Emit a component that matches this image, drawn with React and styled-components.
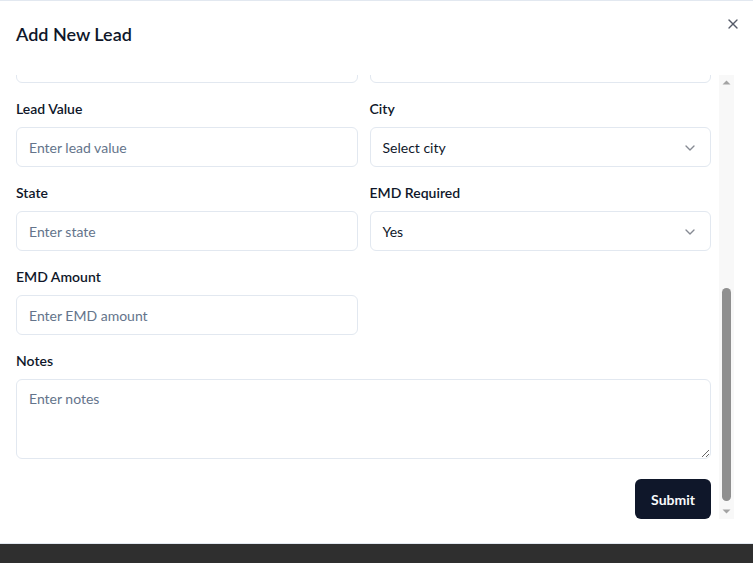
import React, { useLayoutEffect, useRef, useState } from "react";
import styled, { createGlobalStyle } from "styled-components";
import { X, ChevronDown } from "lucide-react";

const GlobalStyle = createGlobalStyle`
  html, body {
    margin: 0;
    padding: 0;
    background: #2f2f2f;
    height: 100%;
  }
  * { box-sizing: border-box; }
  body {
    font-family: "Lato", "Liberation Sans", sans-serif;
    color: #0f172a;
  }
`;

const Modal = styled.div`
  position: relative;
  width: 753px;
  height: 544px;
  background: #ffffff;
  border-top: 1px solid #e2e8f0;
  border-bottom: 1px solid #e2e8f0;
  padding: 19px 0 24px;
  display: flex;
  flex-direction: column;
  gap: 27px;
`;

const Header = styled.div`
  padding: 0 16px;
  height: 28px;
  display: flex;
  align-items: center;
`;

const Title = styled.h2`
  margin: 0;
  font-size: 18px;
  line-height: 28px;
  font-weight: 600;
  color: #0f172a;
`;

const CloseButton = styled.button`
  position: absolute;
  top: 15px;
  right: 12px;
  width: 16px;
  height: 16px;
  padding: 0;
  border: none;
  background: transparent;
  color: #0f172a;
  opacity: 0.7;
  display: flex;
  align-items: center;
  justify-content: center;
  cursor: pointer;
`;

const ScrollFrame = styled.div`
  height: 444px;
  margin: 0 19px 0 16px;
  display: flex;
`;

const Viewport = styled.div`
  flex: 1;
  min-width: 0;
  padding-right: 8px;
  overflow-y: auto;
  scrollbar-width: none;
  &::-webkit-scrollbar { display: none; }
`;

const ScrollTrack = styled.div`
  width: 15px;
  flex: none;
  background: #f8f8f8;
  display: flex;
  flex-direction: column;
`;

const ArrowButton = styled.div`
  height: 15px;
  flex: none;
  display: flex;
  align-items: center;
  justify-content: center;
`;

const ThumbRail = styled.div`
  position: relative;
  flex: 1;
`;

const Thumb = styled.div`
  position: absolute;
  left: 3px;
  right: 3px;
  background: #8f8f8f;
  border-radius: 5px;
`;

const Form = styled.form`
  display: flex;
  flex-direction: column;
`;

const Grid = styled.div`
  display: grid;
  grid-template-columns: 1fr 1fr;
  column-gap: 12px;
  row-gap: 16px;
`;

const Field = styled.div`
  display: flex;
  flex-direction: column;
  gap: 8px;
  grid-column: ${p => (p.$full ? "1 / -1" : "auto")};
`;

const Label = styled.label`
  font-size: 14px;
  line-height: 20px;
  font-weight: 600;
  color: #0f172a;
`;

const Input = styled.input`
  height: 40px;
  width: 100%;
  border: 1px solid #e2e8f0;
  border-radius: 6px;
  padding: 1px 12px 0;
  font-family: "Lato", "Liberation Sans", sans-serif;
  font-size: 14px;
  color: #0f172a;
  background: #fff;
  outline: none;
  &::placeholder { color: #64748b; }
`;

const SelectTrigger = styled.button`
  height: 40px;
  width: 100%;
  border: 1px solid #e2e8f0;
  border-radius: 6px;
  padding: 1px 12px 0;
  font-family: "Lato", "Liberation Sans", sans-serif;
  font-size: 14px;
  color: #0f172a;
  background: #fff;
  display: flex;
  align-items: center;
  justify-content: space-between;
  text-align: left;
  cursor: pointer;
  svg { opacity: 0.5; }
`;

const TextArea = styled.textarea`
  height: 80px;
  width: 100%;
  border: 1px solid #e2e8f0;
  border-radius: 6px;
  padding: 9px 12px 7px;
  font-family: "Lato", "Liberation Sans", sans-serif;
  font-size: 14px;
  line-height: 20px;
  color: #0f172a;
  background: #fff;
  outline: none;
  display: block;
  &::placeholder { color: #64748b; }
`;

const Actions = styled.div`
  display: flex;
  justify-content: flex-end;
  margin-top: 20px;
`;

const SubmitButton = styled.button`
  height: 40px;
  padding: 0 16px;
  border: none;
  border-radius: 6px;
  background: #0f172a;
  color: #f8fafc;
  font-family: "Lato", "Liberation Sans", sans-serif;
  font-size: 14px;
  font-weight: 700;
  cursor: pointer;
`;

const fields = [
  { label: "Lead Name", placeholder: "Enter lead name" },
  { label: "Company Name", placeholder: "Enter company name" },
  { label: "Contact Person", placeholder: "Enter contact person" },
  { label: "Phone Number", placeholder: "Enter phone number" },
  { label: "Email", placeholder: "Enter email" },
  { label: "Lead Source", select: "Select source" },
  { label: "Status", select: "New" },
  { label: "Assigned To", select: "Select user" },
  { label: "Tender Number", placeholder: "Enter tender number" },
  { label: "Due Date", placeholder: "dd-mm-yyyy" },
  { label: "Lead Value", placeholder: "Enter lead value" },
  { label: "City", select: "Select city" },
  { label: "State", placeholder: "Enter state" },
  { label: "EMD Required", select: "Yes" },
  { label: "EMD Amount", placeholder: "Enter EMD amount" },
];

function ArrowIcon({ down }) {
  return (
    <svg width="9" height="5" viewBox="0 0 9 5">
      <path d={down ? "M0.5 0.5 L8.5 0.5 L4.5 4.5 Z" : "M0.5 4.5 L8.5 4.5 L4.5 0.5 Z"} fill="#a3a3a3" />
    </svg>
  );
}

export default function App() {
  const viewportRef = useRef(null);
  const railRef = useRef(null);
  const [thumb, setThumb] = useState({ top: 0, height: 0 });

  useLayoutEffect(() => {
    const el = viewportRef.current;
    const rail = railRef.current;
    if (!el || !rail) return;
    const update = () => {
      const railH = rail.clientHeight;
      const ratio = el.clientHeight / el.scrollHeight;
      const h = Math.max(20, railH * ratio);
      const max = el.scrollHeight - el.clientHeight;
      const top = max > 0 ? (railH - h) * (el.scrollTop / max) : 0;
      setThumb({ top: top + 3, height: h - 6 });
    };
    el.scrollTop = el.scrollHeight;
    update();
    el.addEventListener("scroll", update);
    return () => el.removeEventListener("scroll", update);
  }, []);

  return (
    <>
      <GlobalStyle />
      <Modal role="dialog">
        <Header>
          <Title>Add New Lead</Title>
        </Header>
        <CloseButton type="button" aria-label="Close">
          <X size={16} strokeWidth={2} />
        </CloseButton>
        <ScrollFrame>
          <Viewport ref={viewportRef}>
            <Form onSubmit={e => e.preventDefault()}>
              <Grid>
                {fields.map(f => (
                  <Field key={f.label}>
                    <Label>{f.label}</Label>
                    {f.select ? (
                      <SelectTrigger type="button">
                        <span>{f.select}</span>
                        <ChevronDown size={16} />
                      </SelectTrigger>
                    ) : (
                      <Input placeholder={f.placeholder} />
                    )}
                  </Field>
                ))}
                <Field $full>
                  <Label>Notes</Label>
                  <TextArea placeholder="Enter notes" />
                </Field>
              </Grid>
              <Actions>
                <SubmitButton type="submit">Submit</SubmitButton>
              </Actions>
            </Form>
          </Viewport>
          <ScrollTrack aria-hidden="true">
            <ArrowButton><ArrowIcon /></ArrowButton>
            <ThumbRail ref={railRef}>
              <Thumb style={{ top: thumb.top, height: thumb.height }} />
            </ThumbRail>
            <ArrowButton><ArrowIcon down /></ArrowButton>
          </ScrollTrack>
        </ScrollFrame>
      </Modal>
    </>
  );
}
